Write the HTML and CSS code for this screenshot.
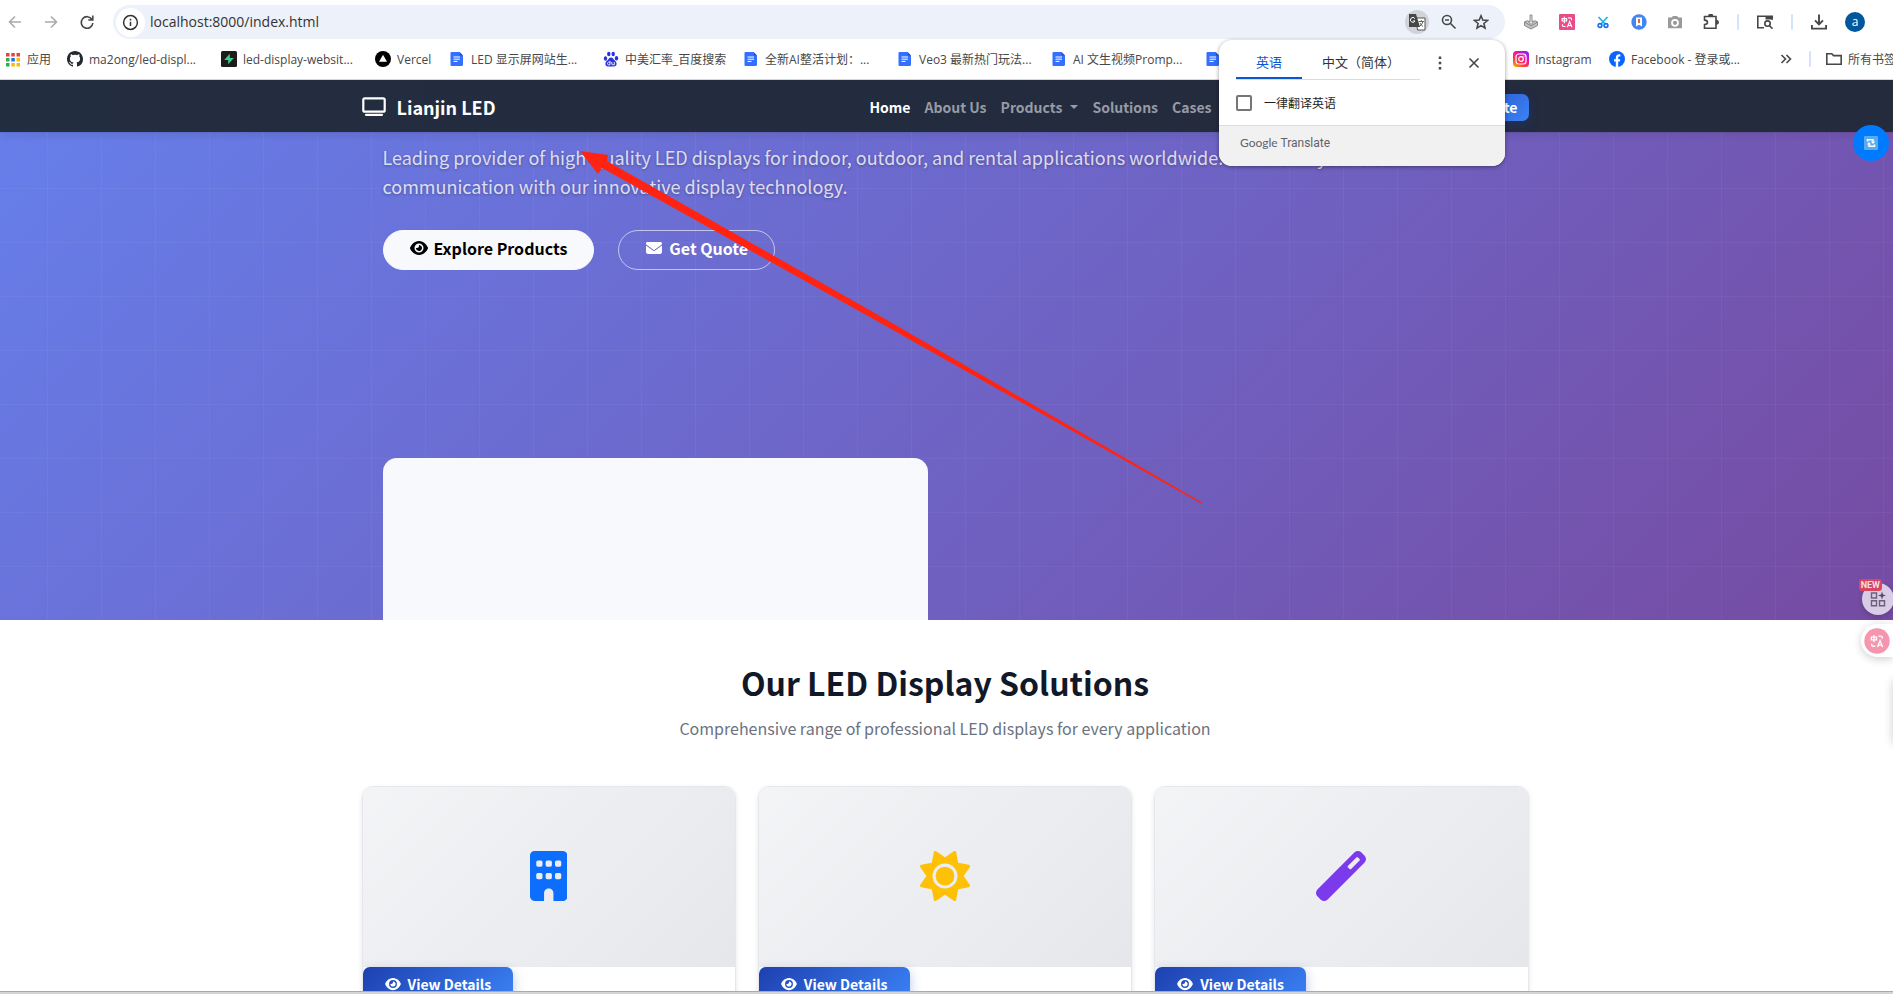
FILE: index.html
```html
<!DOCTYPE html>
<html lang="en">
<head>
<meta charset="utf-8">
<title>Lianjin LED</title>
<link rel="stylesheet" href="styles.css">
</head>
<body>
<svg class="defs" aria-hidden="true">
  <symbol id="doc" viewBox="0 0 16 16"><path d="M2.500 1h8L14 4.500v9A1.500 1.500 0 0 1 12.500 15h-10A1 1 0 0 1 1.500 14V2a1 1 0 0 1 1-1z" fill="#3370ff"/><path d="M10.500 1 14 4.500h-3z" fill="#1d4fd0"/><path d="M4.500 6h6.500M4.500 8.200h6.500M4.500 10.400h4" stroke="#fff" stroke-width="1"/></symbol>
  <symbol id="eye" viewBox="0 0 576 512"><path fill="currentColor" d="M288 32c-80.800 0-145.500 36.800-192.600 80.600C48.600 156 17.300 208 2.500 243.700c-3.300 7.900-3.300 16.700 0 24.600C17.300 304 48.600 356 95.400 399.400C142.500 443.200 207.200 480 288 480s145.500-36.800 192.600-80.600c46.800-43.500 78.100-95.400 93-131.100c3.300-7.900 3.300-16.700 0-24.600c-14.900-35.700-46.200-87.700-93-131.100C433.500 68.800 368.800 32 288 32zM144 256a144 144 0 1 1 288 0 144 144 0 1 1-288 0zm144-64c0 35.300-28.700 64-64 64c-7.100 0-13.900-1.200-20.300-3.300c-5.500-1.800-11.900 1.600-11.700 7.400c.3 6.900 1.300 13.800 3.200 20.700c13.700 51.200 66.400 81.600 117.600 67.900s81.600-66.400 67.900-117.600c-11.100-41.500-47.800-69.400-88.600-71.100c-5.800-.2-9.200 6.100-7.400 11.700c2.100 6.400 3.300 13.200 3.300 20.300z"/></symbol>
  <symbol id="trans" viewBox="0 0 16 16"><path d="M1.500 3.500h6v3.200h-6zM4.500 1v8.500M9.500 2.500h3q1.500 0 1.500 1.500v1.500M2 11v1.500q0 1.500 1.500 1.500h2.500M8.500 15l3-7.500 3 7.500M9.500 12.700h4" fill="none" stroke="#fff" stroke-width="1.500"/></symbol>
</svg>

<header class="chrome">
  <div class="toolbar">
    <div class="nav-buttons">
      <button class="icon-btn muted" aria-label="Back"><svg viewBox="0 0 16 16"><path d="M14 8H3M8 2.500 2.500 8 8 13.500"/></svg></button>
      <button class="icon-btn muted" aria-label="Forward"><svg viewBox="0 0 16 16"><path d="M2 8h11M8 2.500 13.500 8 8 13.500"/></svg></button>
      <button class="icon-btn" aria-label="Reload"><svg viewBox="0 0 16 16"><path d="M13 5.500A5.800 5.800 0 1 0 13.800 9M13.800 1.500v4.500H9.300"/></svg></button>
    </div>
    <div class="omnibox">
      <button class="site-info" aria-label="Site information"><svg viewBox="0 0 16 16"><circle cx="8" cy="8" r="6.500"/><path d="M8 7.200v4M8 4.500v1.500"/></svg></button>
      <input class="url" aria-label="Address" value="localhost:8000/index.html">
      <button class="round-btn" aria-label="Translate this page"><svg viewBox="0 0 18 18"><path d="M8 5h9v12H9.500z" fill="#fff" stroke="#555" stroke-width="1"/><path d="M1 1h7l4 13H1z" fill="#474747" stroke="none"/><path d="M6.800 5.500A2.400 2.400 0 1 0 7 8H5" stroke="#fff" stroke-width="1"/><path d="M10.500 8.500H16M13.200 7v1.500M15 8.500q-.8 3-3.500 5M12 10q1.200 2.500 3 3.500" stroke="#555" stroke-width=".9"/></svg></button>
      <button class="icon-btn" aria-label="Zoom"><svg viewBox="0 0 16 16"><circle cx="6" cy="6" r="4.500"/><path d="m9.300 9.300 5.200 5.200M4 6h4"/></svg></button>
      <button class="icon-btn" aria-label="Bookmark this page"><svg viewBox="0 0 16 16"><path d="m8 1.800 1.800 4.300 4.700.4-3.600 3 1.100 4.600L8 11.600l-4 2.500 1.100-4.600-3.600-3 4.700-.4z"/></svg></button>
    </div>
    <div class="extensions">
      <button class="icon-btn" aria-label="Clean"><svg viewBox="0 0 16 16"><path d="M4.500 6.500 1.500 8v3.500L8 15l6.500-3.500V8l-3-1.500" fill="#c4c4c4" stroke="#888" stroke-width="1"/><path d="M1.500 8 8 12l6.500-4" stroke="#888" stroke-width="1"/><path d="M7 1h2v6.500h2L8 10.500l-3-3h2z" fill="#ddd" stroke="#888" stroke-width=".9"/></svg></button>
      <button class="icon-btn" aria-label="Immersive translate"><svg viewBox="0 0 16 16"><rect width="16" height="16" rx="1" fill="#ea4c89" stroke="none"/><use href="#trans" x="2" y="2" width="12" height="12"/></svg></button>
      <button class="icon-btn" aria-label="Scissors"><svg viewBox="0 0 16 16"><path d="m3.500 3 7 7.500M12.500 3l-7 7.500" stroke="#18b4e8"/><circle cx="5" cy="11.500" r="1.900" stroke="#1a73e8"/><circle cx="11" cy="11.500" r="1.900" stroke="#1a73e8"/></svg></button>
      <button class="icon-btn" aria-label="Reader"><svg viewBox="0 0 16 16"><circle cx="8" cy="8" r="7.700" fill="#4285f4" stroke="none"/><path d="M5 3.500h6v9L8 10.800 5 12.500z" fill="#fff" stroke="none"/><path d="M7 5h2v4H7z" fill="#e06a2b" stroke="none"/></svg></button>
      <button class="icon-btn" aria-label="Screenshot"><svg viewBox="0 0 16 16"><path d="M1 3.500h3.500L6 2h4l1.500 1.500H15v10.800H1z" fill="#9a9a9a" stroke="none"/><circle cx="8" cy="8.800" r="3" stroke="#fff" stroke-width="1.800"/></svg></button>
      <button class="icon-btn" aria-label="Extensions"><svg viewBox="0 0 16 16"><path d="M1.500 2.500H13v11.700H1.500v-3.700q3-.2 3-2.200t-3-2.200z"/><path d="M6 2a1.700 1.700 0 0 1 3.400 0zM13.500 6.500a1.700 1.700 0 0 1 0 3.400z" fill="#474747"/></svg></button>
      <span class="sep"></span>
      <button class="icon-btn" aria-label="Side search"><svg viewBox="0 0 16 16"><path d="M7 13.700H.8V2.200h14.400v3.600"/><path d="M8.500 2.500h6.500v3H8.500z" fill="#474747" stroke="none"/><circle cx="10.500" cy="9.600" r="2.700"/><path d="m12.500 11.700 3 3"/></svg></button>
      <span class="sep"></span>
      <button class="icon-btn" aria-label="Downloads"><svg viewBox="0 0 16 16"><path d="M8 .5v9.500M4 6.300 8 10.300l4-4M.9 11v3.600h14.200V11" stroke-width="1.900"/></svg></button>
      <button class="avatar" aria-label="Profile">a</button>
      <button class="icon-btn" aria-label="Menu"><svg viewBox="0 0 16 16"><path d="M8 1.500v2.600M8 6.700v2.600M8 11.900v2.600" stroke-width="2.500"/></svg></button>
    </div>
  </div>

  <nav class="bookmarks" aria-label="Bookmarks">
    <a href="#" class="bm bm-apps"><svg viewBox="0 0 16 16"><path d="M1 2h3.500v3.500H1zM6.300 2h3.500v3.500H6.300zM11.500 2H15v3.500h-3.500z" fill="#ea4335"/><path d="M1 7h3.500v3.500H1zM1 12h3.500v3.500H1z" fill="#34a853"/><path d="M6.300 7h3.500v3.500H6.300z" fill="#1a73e8"/><path d="M11.500 7H15v3.500h-3.500zM6.300 12h3.500v3.500H6.300zM11.500 12H15v3.500h-3.500z" fill="#fbbc04"/></svg>应用</a>
    <a href="#" class="bm bm-wide"><svg viewBox="0 0 16 16"><path fill="#24292f" d="M8 0C3.580 0 0 3.580 0 8c0 3.540 2.290 6.530 5.470 7.590.4.070.55-.17.55-.38 0-.19-.01-.82-.01-1.490-2.010.37-2.530-.49-2.690-.94-.09-.23-.48-.94-.82-1.130-.28-.15-.68-.52-.01-.53.63-.01 1.080.58 1.230.82.72 1.210 1.870.87 2.330.66.070-.52.28-.87.51-1.070-1.780-.2-3.640-.89-3.640-3.950 0-.87.31-1.590.82-2.150-.08-.2-.36-1.020.08-2.120 0 0 .67-.21 2.200.82.64-.18 1.320-.27 2-.27s1.360.09 2 .27c1.530-1.040 2.200-.82 2.200-.82.44 1.100.16 1.920.08 2.120.51.56.82 1.270.82 2.150 0 3.070-1.870 3.750-3.650 3.950.29.25.54.73.54 1.480 0 1.070-.01 1.930-.01 2.200 0 .21.15.46.55.38A8.010 8.010 0 0 0 16 8c0-4.420-3.580-8-8-8z"/></svg>ma2ong/led-displ...</a>
    <a href="#" class="bm bm-wide"><svg viewBox="0 0 16 16"><rect width="16" height="16" rx="1.500" fill="#1c1c1c"/><path d="M8.800 2.800v4.200h4L7.200 13.200V9H3.200z" fill="#3ecf8e"/></svg>led-display-websit...</a>
    <a href="#" class="bm bm-short"><svg viewBox="0 0 16 16"><circle cx="8" cy="8" r="8"/><path d="m8 3.800 4 7H4z" fill="#fff"/></svg>Vercel</a>
    <a href="#" class="bm bm-wide"><svg><use href="#doc"/></svg>LED 显示屏网站生...</a>
    <a href="#" class="bm bm-mid"><svg viewBox="0 0 16 16"><g fill="#2932e1"><ellipse cx="2.500" cy="7.500" rx="1.700" ry="2.200"/><ellipse cx="5.800" cy="3" rx="1.700" ry="2.300"/><ellipse cx="10.200" cy="3" rx="1.700" ry="2.300"/><ellipse cx="13.500" cy="7.300" rx="1.700" ry="2.200"/><path d="M8 6.500c2 0 2.500 2 4 3.300 2.500 2 2 5.700-1 5.700H5c-3 0-3.500-3.700-1-5.700C5.500 8.500 6 6.500 8 6.500z"/></g><path d="M7 9.800v4H5.500q-1-.2-1-1.300t1-1.300H7M8.800 11v2q0 .8.800.8h1.700V11" fill="none" stroke="#fff" stroke-width=".9"/></svg>中美汇率_百度搜索</a>
    <a href="#" class="bm bm-wide"><svg><use href="#doc"/></svg>全新AI整活计划：...</a>
    <a href="#" class="bm bm-wide"><svg><use href="#doc"/></svg>Veo3 最新热门玩法...</a>
    <a href="#" class="bm bm-wide"><svg><use href="#doc"/></svg>AI 文生视频Promp...</a>
    <a href="#" class="bm bm-wide"><svg><use href="#doc"/></svg></a>
    <a href="#" class="bm bm-wide"><svg><use href="#doc"/></svg></a>
    <a href="#" class="bm bm-insta"><svg viewBox="0 0 16 16"><defs><linearGradient id="ig" x1="0" y1="1" x2=".7" y2="0"><stop offset="0" stop-color="#ffc400"/><stop offset=".35" stop-color="#ff3d3d"/><stop offset=".7" stop-color="#f0149a"/><stop offset="1" stop-color="#9a1cf5"/></linearGradient></defs><rect width="16" height="16" rx="3.500" fill="url(#ig)"/><rect x="3" y="3" width="10" height="10" rx="2.800" fill="none" stroke="#fff" stroke-width="1.200"/><circle cx="8" cy="8" r="2.300" fill="none" stroke="#fff" stroke-width="1.200"/><circle cx="10.900" cy="5.100" r=".7" fill="#fff"/></svg>Instagram</a>
    <a href="#" class="bm bm-wide"><svg viewBox="0 0 16 16"><circle cx="8" cy="8" r="8" fill="#0866ff"/><path d="M6.800 16v-5.500H5V8.200h1.800V7c0-2.600 1.200-3.700 3.400-3.700l1.200.1v2.100h-.9c-1 0-1.300.5-1.300 1.400v1.300h2.100l-.4 2.300H9.200V16z" fill="#fff"/></svg>Facebook - 登录或...</a>
    <span class="bm-end">
      <button class="icon-btn" aria-label="More bookmarks"><svg viewBox="0 0 16 16"><path d="m3.500 4 4 4-4 4M8.500 4l4 4-4 4"/></svg></button>
      <span class="sep"></span>
      <a href="#" class="bm"><svg class="line" viewBox="0 0 16 16"><path d="M.8 13.200V2.800h5l1.700 1.800h7.700v8.600z"/></svg>所有书签</a>
    </span>
  </nav>
</header>

<main class="site">
  <nav class="navbar" aria-label="Main">
    <div class="container navbar-inner">
      <a href="#" class="brand"><svg viewBox="0 0 24 20" aria-hidden="true"><rect x="1.300" y="1.300" width="21.400" height="13.400" rx="1.500" fill="none" stroke="#fff" stroke-width="2.200"/><path d="M4 17.800h16" stroke="#fff" stroke-width="2.200" stroke-linecap="round"/></svg>Lianjin LED</a>
      <div class="menu">
        <a href="#" class="active">Home</a><a href="#">About Us</a><a href="#" class="has-caret">Products</a><a href="#">Solutions</a><a href="#">Cases</a>
      </div>
      <a href="#" class="nav-cta">Get Quote</a>
    </div>
  </nav>

  <section class="hero">
    <div class="container hero-inner">
      <p class="lead">Leading provider of high-quality LED displays for indoor, outdoor, and rental applications worldwide. Transform your visual communication with our innovative display technology.</p>
      <div class="actions">
        <a href="#" class="pill pill-light"><svg><use href="#eye"/></svg>Explore Products</a>
        <a href="#" class="pill pill-outline"><svg viewBox="0 0 512 512"><path fill="currentColor" d="M48 64C21.500 64 0 85.500 0 112c0 15.100 7.100 29.300 19.200 38.400L236.800 313.600c11.400 8.500 27 8.500 38.400 0L492.800 150.400c12.100-9.100 19.200-23.300 19.200-38.400c0-26.500-21.500-48-48-48H48zM0 176V384c0 35.300 28.700 64 64 64H448c35.300 0 64-28.700 64-64V176L294.400 339.200c-22.800 17.100-54 17.100-76.800 0L0 176z"/></svg>Get Quote</a>
      </div>
      <div class="hero-panel"></div>
    </div>
  </section>

  <section class="solutions container">
    <h2>Our LED Display Solutions</h2>
    <p class="sub">Comprehensive range of professional LED displays for every application</p>
    <div class="cards">
      <article class="card">
        <div class="card-image"><svg viewBox="0 0 384 512"><path fill="#0d6efd" fill-rule="evenodd" d="M48 0C21.500 0 0 21.500 0 48V464c0 26.500 21.500 48 48 48h96V432c0-26.500 21.500-48 48-48s48 21.500 48 48v80h96c26.500 0 48-21.500 48-48V48c0-26.500-21.500-48-48-48H48zM80 96h32q16 0 16 16v32q0 16-16 16H80q-16 0-16-16v-32q0-16 16-16zM176 96h32q16 0 16 16v32q0 16-16 16h-32q-16 0-16-16v-32q0-16 16-16zM272 96h32q16 0 16 16v32q0 16-16 16h-32q-16 0-16-16v-32q0-16 16-16zM80 224h32q16 0 16 16v32q0 16-16 16H80q-16 0-16-16v-32q0-16 16-16zM176 224h32q16 0 16 16v32q0 16-16 16h-32q-16 0-16-16v-32q0-16 16-16zM272 224h32q16 0 16 16v32q0 16-16 16h-32q-16 0-16-16v-32q0-16 16-16z"/></svg></div>
        <a href="#" class="details"><svg><use href="#eye"/></svg>View Details</a>
      </article>
      <article class="card">
        <div class="card-image"><svg viewBox="0 0 512 512"><path fill="#ffc107" d="M361.500 1.200c5 2.100 8.600 6.600 9.600 11.900L391 121l107.900 19.800c5.300 1 9.800 4.600 11.900 9.600s1.500 10.700-1.600 15.200L446.900 256l62.300 90.300c3.100 4.500 3.700 10.200 1.600 15.200s-6.600 8.600-11.900 9.600L391 391 371.100 498.900c-1 5.300-4.600 9.800-9.600 11.900s-10.700 1.500-15.200-1.600L256 446.900l-90.300 62.300c-4.500 3.100-10.200 3.700-15.200 1.600s-8.600-6.600-9.600-11.900L121 391 13.100 371.100c-5.300-1-9.800-4.600-11.900-9.600s-1.500-10.700 1.600-15.200L65.100 256 2.800 165.700c-3.100-4.500-3.700-10.200-1.600-15.200s6.600-8.600 11.900-9.600L121 121 140.900 13.100c1-5.300 4.600-9.800 9.600-11.900s10.700-1.500 15.200 1.600L256 65.100 346.300 2.800c4.500-3.100 10.200-3.700 15.200-1.600zM160 256a96 96 0 1 1 192 0 96 96 0 1 1-192 0zm224 0a128 128 0 1 0-256 0 128 128 0 1 0 256 0z"/></svg></div>
        <a href="#" class="details"><svg><use href="#eye"/></svg>View Details</a>
      </article>
      <article class="card">
        <div class="card-image"><svg viewBox="0 0 512 512"><path fill="#7c3aed" fill-rule="evenodd" d="M14 395 395 14q34-28 68 0l35 35q28 34 0 68L117 498q-34 28-68 0l-35-35q-28-34 0-68zM328 168l16 16q8 6 16 0L446 98q8-8 0-16l-16-16q-8-8-16 0L328 152q-8 8 0 16z"/></svg></div>
        <a href="#" class="details"><svg><use href="#eye"/></svg>View Details</a>
      </article>
    </div>
  </section>
</main>
<div class="window-edge"></div>

<svg class="arrow" viewBox="0 0 622 353" aria-hidden="true"><path fill="#ff2412" d="M0 0 28 4 27 10 300 165 622 351.500 622 353 297 170 22 17 18 23z"/></svg>

<section class="translate" aria-label="Translate">
  <div class="translate-head">
    <div class="tabs"><button class="tab selected">英语</button><button class="tab">中文（简体）</button></div>
    <button class="icon-btn" aria-label="Options"><svg viewBox="0 0 16 16"><path d="M8 1.500v2.600M8 6.700v2.600M8 11.900v2.600" stroke-width="2.500"/></svg></button>
    <button class="icon-btn" aria-label="Close"><svg viewBox="0 0 16 16"><path d="m3.500 3.500 9 9M12.500 3.500l-9 9"/></svg></button>
  </div>
  <label class="always"><input type="checkbox">一律翻译英语</label>
  <div class="translate-foot"><span class="g">Google</span> Translate</div>
</section>

<button class="float float-sync" aria-label="Sync"><svg viewBox="0 0 14 14"><rect width="14" height="14" rx="1" fill="#55acee"/><path d="M3.500 5.500V3.800h5.500v2M10.500 8.500v1.700H5v-2" fill="none" stroke="#fff" stroke-width="1.500"/><path d="M6.800 5.500h4.400L9 8zM7.200 8.500H2.800L5 6z" fill="#fff"/></svg></button>
<button class="float float-grid" aria-label="Tools"><svg viewBox="0 0 16 16"><path d="M1.500 2h5v5h-5zM1.500 9.800h5v5h-5zM9.500 9.800h5v5h-5z" fill="none" stroke="#6b6078" stroke-width="1.400"/><path d="m12 .5 1 3 3 1-3 1-1 3-1-3-3-1 3-1z" fill="#554b60"/></svg><span class="badge">NEW</span></button>
<button class="float float-trans" aria-label="Translate page"><svg viewBox="0 0 26 26"><circle cx="13" cy="13" r="12.700" fill="#f595ae"/><use href="#trans" x="6" y="6" width="14" height="14"/></svg></button>
<div class="side-shade"></div>
</body>
</html>
```
FILE: styles.css
```css
* { box-sizing: border-box; }
body {
  margin: 0;
  height: 100vh;
  display: flex;
  flex-direction: column;
  overflow: hidden;
  position: relative;
  background: #fff;
  font-family: "Noto Sans CJK SC", sans-serif;
}
a { color: inherit; text-decoration: none; }
button { border: 0; padding: 0; background: none; font: inherit; color: inherit; }
svg { display: block; flex: none; }
.defs { position: absolute; width: 0; height: 0; }

/* Browser chrome */
.chrome {
  flex: none;
  border-bottom: 1px solid #d5d7da;
  font-family: "Open Sans", "Noto Sans CJK SC", sans-serif;
  font-size: 12px;
  color: #474747;
}
.toolbar { display: flex; align-items: center; height: 39px; padding-top: 5px; }
.nav-buttons { display: flex; gap: 20px; padding-left: 7px; width: 113px; }
.icon-btn { flex: none; width: 16px; height: 16px; }
.icon-btn > svg, .line { width: 16px; height: 16px; fill: none; stroke: #474747; stroke-width: 1.6; }
.muted > svg { stroke: #aaa; }
.omnibox {
  flex: 1;
  display: flex;
  align-items: center;
  gap: 16px;
  height: 34px;
  padding: 0 16px 0 3px;
  border-radius: 17px;
  background: #edf1fa;
}
.site-info { width: 29px; height: 29px; border-radius: 50%; background: #fff; }
.site-info svg { width: 17px; height: 17px; margin: 0 auto; fill: none; stroke: #333; stroke-width: 1.4; }
.url {
  flex: 1;
  min-width: 0;
  margin-left: -11px;
  border: 0;
  padding: 0 0 2px;
  background: none;
  font: 14px "Open Sans", sans-serif;
  color: #333;
}
.round-btn { display: grid; place-items: center; width: 24px; height: 24px; margin-right: -4px; border-radius: 50%; background: #d0d3da; }
.round-btn svg { width: 18px; height: 18px; fill: none; }
.extensions { display: flex; align-items: center; gap: 20px; margin-right: -10px; padding-left: 18px; }
.sep { width: 2px; height: 16px; border-radius: 1px; background: #d3e3fd; }
.extensions .sep { margin: 0 -2px; }
.avatar { width: 20px; height: 20px; margin: 0 2px 0 -2px; border-radius: 50%; background: #01579b; color: #fff; line-height: 18px; }
.bookmarks { display: flex; align-items: center; height: 40px; padding-left: 5px; overflow: hidden; }
.bm { display: flex; align-items: center; gap: 6px; flex: none; white-space: nowrap; }
.bm > svg { width: 16px; height: 16px; }
.bm-apps { width: 62px; }
.bm-wide { width: 154px; }
.bm-short { width: 74px; }
.bm-mid { width: 140px; }
.bm-insta { width: 96px; }
.bm-end { flex: none; display: flex; align-items: center; gap: 15px; margin-left: 15px; }

/* Site */
.site { flex: 1; min-height: 0; overflow: hidden; }
.container { width: 100%; max-width: 1188px; margin: 0 auto; padding: 0 12px 0 9px; }
.navbar {
  position: relative;
  background: linear-gradient(90deg, #222d3f, #242b3d);
  box-shadow: 0 2px 8px rgba(0, 0, 0, .15);
}
.navbar-inner { display: flex; align-items: center; height: 52px; padding-top: 2px; }
.brand { display: flex; align-items: center; gap: 11px; margin-right: auto; color: #fff; font-size: 18px; font-weight: 700; }
.brand svg { width: 24px; height: 20px; }
.menu { display: flex; gap: 14px; margin-right: 227px; color: #969ba5; font-size: 14px; font-weight: 700; }
.menu .active { color: #fff; }
.has-caret { display: flex; align-items: center; gap: 8px; }
.has-caret::after { content: ""; border: 4px solid transparent; border-top-color: currentColor; border-bottom: 0; }
.nav-cta {
  width: 94px;
  margin-left: -4px;
  padding: 0 14px;
  border-radius: 7px;
  background: linear-gradient(135deg, #1e40af, #3b82f6);
  box-shadow: 0 4px 12px rgba(30, 64, 175, .3);
  color: #fff;
  font-size: 14px;
  font-weight: 700;
  line-height: 27px;
  text-align: center;
  white-space: nowrap;
}
.hero {
  height: 488px;
  overflow: hidden;
  background:
    repeating-linear-gradient(90deg, transparent 0 47px, rgba(255, 255, 255, .04) 47px 48px, transparent 48px 54px),
    repeating-linear-gradient(180deg, transparent 0 2px, rgba(255, 255, 255, .04) 2px 3px, transparent 3px 54px),
    linear-gradient(135deg, #667eea, #764ba2);
}
.hero-inner { padding: 11px 33px 0 30px; }
.lead {
  margin: 0;
  max-width: 1030px;
  font-size: 18px;
  line-height: 29px;
  color: rgba(255, 255, 255, .8);
  text-shadow: 0 1px 3px rgba(0, 0, 0, .3);
}
.actions { display: flex; gap: 24px; margin-top: 29px; }
.pill {
  display: flex;
  align-items: center;
  gap: 6px;
  height: 40px;
  padding: 0 26px 4px;
  border: 1px solid #f8f9fc;
  border-radius: 20px;
  font-size: 16px;
  font-weight: 700;
}
.pill svg { width: 18px; height: 16px; }
.pill-light { background: #f8f9fc; color: #000; }
.pill-outline { border-color: rgba(255, 255, 255, .6); color: #fff; }
.hero-panel { width: 49%; max-width: 545px; height: 400px; margin-top: 188px; border-radius: 14px; background: #f8f9fc; }
.solutions { text-align: center; }
.solutions h2 { margin: 0; padding-top: 35px; font-size: 32px; font-weight: 700; line-height: 54px; color: #111827; }
.sub { margin: 5px 0 0; font-size: 16px; line-height: 28px; color: #6b7280; }
.cards { display: grid; grid-template-columns: repeat(3, 1fr); gap: 22px; margin-top: 44px; }
.card {
  height: 400px;
  overflow: hidden;
  border: 1px solid #e5e7eb;
  border-radius: 11px;
  box-shadow: 0 2px 5px rgba(0, 0, 0, .1);
  text-align: left;
}
.card-image { display: grid; place-items: center; height: 180px; padding-bottom: 2px; background: linear-gradient(135deg, #f3f4f6, #e5e7eb); }
.card-image svg { height: 50px; }
.details {
  display: inline-flex;
  align-items: center;
  gap: 7px;
  height: 36px;
  padding: 0 22px 2px;
  border-radius: 7px;
  background: linear-gradient(135deg, #1e40af, #3b82f6);
  box-shadow: 0 4px 12px rgba(30, 64, 175, .3);
  color: #fff;
  font-size: 14px;
  font-weight: 700;
}
.details svg { width: 16px; height: 14px; }
.window-edge { flex: none; height: 3px; background: #d5d5d5; border-top: 1px solid #aaa; }

/* Overlays */
.arrow { position: absolute; left: 580px; top: 151px; width: 622px; height: 353px; }
.translate {
  position: absolute;
  right: 388px;
  top: 40px;
  width: 286px;
  overflow: hidden;
  border-radius: 13px;
  background: #fff;
  box-shadow: 0 1px 4px rgba(0, 0, 0, .4);
  font-size: 13px;
  color: #333;
}
.translate-head { display: flex; align-items: center; gap: 18px; padding: 6px 23px 0 17px; }
.tabs { display: flex; flex: 1; margin-right: -6px; border-bottom: 1px solid #dadce0; }
.tab { flex: 1; height: 33px; white-space: nowrap; border-bottom: 2px solid transparent; }
.tab.selected { flex: 0 0 66px; border-color: #0b57d0; color: #0b57d0; }
.always { display: flex; align-items: center; gap: 12px; height: 45px; padding-left: 17px; font-size: 12px; color: #1f1f1f; }
.always input { appearance: none; width: 16px; height: 16px; margin: 0; border: 2px solid #757575; border-radius: 2px; }
.translate-foot { height: 41px; padding: 7px 21px; border-top: 1px solid #dadce0; background: #f1f1f1; font: 12px/20px Roboto, sans-serif; color: #5f6368; }
.g { font-family: Lato, sans-serif; }
.float { position: absolute; display: grid; place-items: center; border-radius: 50%; }
.float-sync { right: 4px; top: 125px; width: 36px; height: 36px; background: #007bff; }
.float-sync svg { width: 14px; height: 14px; }
.float-grid { right: -1px; top: 583px; width: 32px; height: 32px; background: #d9cce6; box-shadow: 0 2px 6px rgba(0, 0, 0, .2); }
.float-grid svg { width: 16px; height: 16px; }
.badge { position: absolute; right: 12px; top: -4px; padding: 0 2px; border-radius: 3px; background: #d9465f; color: #f5dfe6; font: 700 9px/12px Roboto, sans-serif; }
.float-trans { right: 0; top: 624px; width: 32px; height: 33px; border-radius: 17px 0 0 17px; background: #fff; box-shadow: 0 2px 8px rgba(0, 0, 0, .2); }
.float-trans > svg { width: 26px; height: 26px; }
.side-shade { position: absolute; right: -10px; top: 680px; width: 10px; height: 64px; box-shadow: 0 0 10px rgba(0, 0, 0, .2); }
```
